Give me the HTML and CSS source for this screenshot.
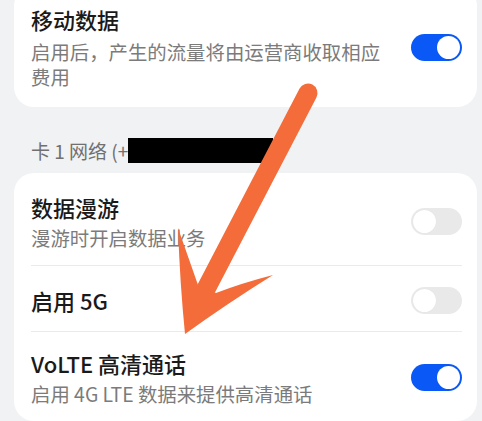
FILE: index.html
```html
<!DOCTYPE html>
<html lang="zh-CN">
<head>
<meta charset="utf-8">
<title>移动网络</title>
<link rel="stylesheet" href="styles.css">
</head>
<body>
<div class="page">
  <section class="card card-first">
    <div class="row">
      <div class="text">
        <div class="title">移动数据</div>
        <div class="sub">启用后，产生的流量将由运营商收取相应费用</div>
      </div>
      <span class="toggle on"><span class="knob"></span></span>
    </div>
  </section>

  <div class="section-head">卡 1 网络 (+<span class="redact"></span></div>

  <section class="card">
    <div class="row">
      <div class="text">
        <div class="title">数据漫游</div>
        <div class="sub">漫游时开启数据业务</div>
      </div>
      <span class="toggle"><span class="knob"></span></span>
    </div>
    <div class="row single">
      <div class="text">
        <div class="title">启用 5G</div>
      </div>
      <span class="toggle"><span class="knob"></span></span>
    </div>
    <div class="row last">
      <div class="text">
        <div class="title">VoLTE 高清通话</div>
        <div class="sub">启用 4G LTE 数据来提供高清通话</div>
      </div>
      <span class="toggle on"><span class="knob"></span></span>
    </div>
  </section>

  <svg class="arrow" width="482" height="421" viewBox="0 0 482 421" aria-hidden="true">
    <line x1="308" y1="107" x2="206" y2="303" stroke="#f36c3a" stroke-width="19" stroke-linecap="round"/>
    <path d="M178 242 L198 299 L216 307 Q242 297 273 289 Q228 317 185 348 Q180 298 178 242 Z" fill="#f36c3a"/>
  </svg>
</div>
</body>
</html>
```

FILE: styles.css
```css
* { box-sizing: border-box; }

html, body {
  margin: 0;
  padding: 0;
  background: #f1f2f4;
}

body {
  width: 482px;
  height: 421px;
  overflow: hidden;
  font-family: "Noto Sans CJK SC", "Noto Sans", sans-serif;
  color: #191919;
}

.page {
  position: relative;
  padding: 0 5px 0 14px;
}

.card {
  background: #ffffff;
  border-radius: 20px;
  padding: 0 15px 0 17px;
}

.card-first {
  margin-top: -14px;
}

.row {
  display: flex;
  align-items: center;
  gap: 16px;
  padding: 19px 0 15px;
  border-top: 1px solid #ebebeb;
}

.row:first-child {
  border-top: none;
}

.card-first .row {
  padding: 18px 0 18px;
}

.card-first .sub {
  margin-top: 5px;
}

.row.single {
  padding: 19px 0 16px;
}

.row.last {
  padding-top: 16px;
}

.text {
  flex: 1;
  min-width: 0;
}

.title {
  font-size: 22px;
  line-height: 30px;
  font-weight: 500;
  color: #1a1a1a;
}

.sub {
  margin-top: 3px;
  font-size: 19.4px;
  line-height: 25px;
  color: #7b7b7b;
}

.toggle {
  position: relative;
  flex: none;
  width: 51px;
  height: 27px;
  border-radius: 14px;
  background: #e9e9e9;
  margin-top: 1px;
}

.toggle .knob {
  position: absolute;
  top: 2px;
  left: 2px;
  width: 23px;
  height: 23px;
  border-radius: 50%;
  background: #ffffff;
  box-shadow: 0 0 1px rgba(0, 0, 0, 0.08);
}

.toggle.on {
  background: #0a59f7;
}

.toggle.on .knob {
  left: auto;
  right: 2px;
}

.section-head {
  position: relative;
  padding: 32px 0 10px 17px;
  font-size: 19px;
  line-height: 24px;
  color: #707070;
}

.redact {
  position: absolute;
  left: 114px;
  top: 31px;
  width: 145px;
  height: 25px;
  background: #000000;
}

.arrow {
  position: absolute;
  left: 0;
  top: 0;
  pointer-events: none;
}
```
